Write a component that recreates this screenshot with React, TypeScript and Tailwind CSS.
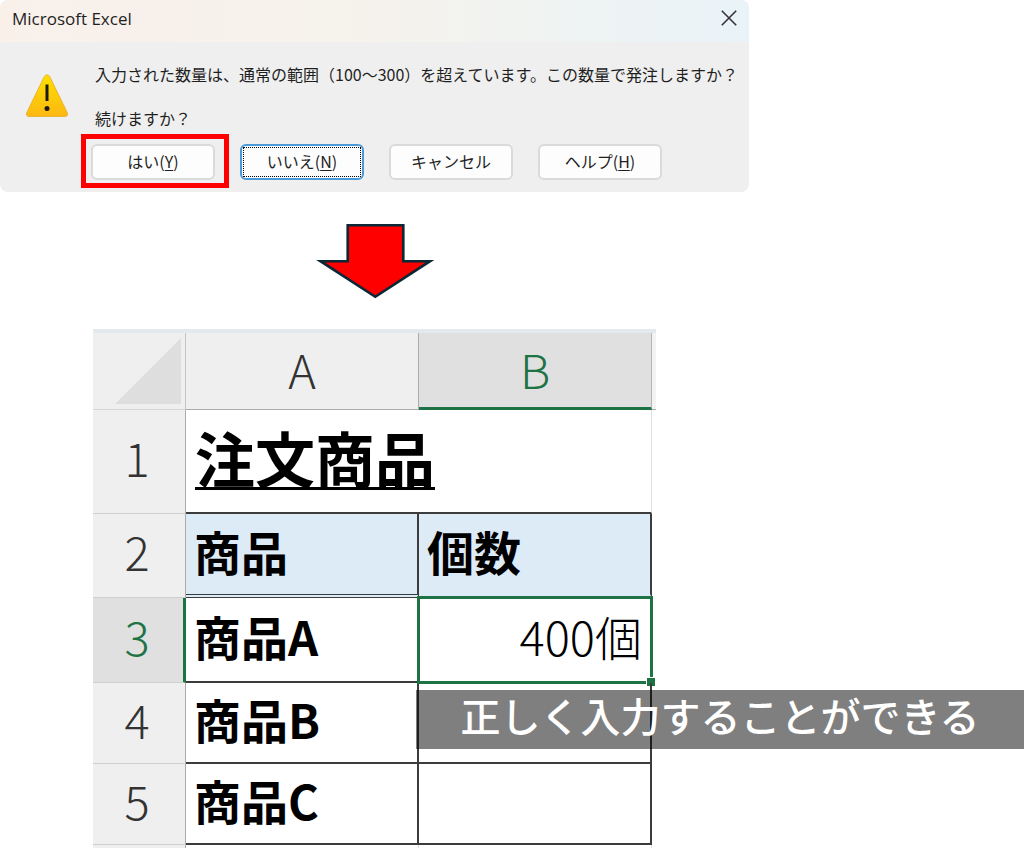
import type { ReactNode } from 'react';
import clsx from 'clsx';

export default function App() {
  return (
    <main className="relative min-h-screen overflow-hidden bg-white font-['Noto_Sans_CJK_JP',sans-serif] text-black">
      <div className="flex w-full max-w-[749px] flex-col items-center">
        <ConfirmDialog />
        <DownArrow />
        <Sheet />
      </div>

      <p className="absolute top-[690px] right-0 left-[416px] bg-black/50 pb-2 text-center text-[40px] leading-[51px] font-medium whitespace-nowrap text-white">
        正しく入力することができる
      </p>
    </main>
  );
}

function ConfirmDialog() {
  return (
    <section
      role="dialog"
      aria-labelledby="dialog-title"
      className="w-full overflow-hidden rounded-lg bg-[#efefef]"
    >
      <header className="flex h-[42px] items-center justify-between bg-linear-to-r from-[#f9f0ea] via-[#f5f2ec] to-[#e9f3f8] px-3">
        <h1
          id="dialog-title"
          className="pb-1 font-['Open_Sans',sans-serif] text-[17px] text-[#1f1f1f]"
        >
          Microsoft Excel
        </h1>
        <button type="button" aria-label="閉じる" className="pb-1.5">
          <svg viewBox="0 0 16 16" className="size-4" stroke="#333" strokeWidth="1.6">
            <path d="M0.8 0.8 15.2 15.2M15.2 0.8 0.8 15.2" />
          </svg>
        </button>
      </header>

      <div className="flex pt-5 pl-6">
        <WarningIcon />
        <div className="ml-[26px] text-base leading-6 whitespace-nowrap text-[#1f1f1f]">
          <p>入力された数量は、通常の範囲（100～300）を超えています。この数量で発注しますか？</p>
          <p className="mt-5">続けますか？</p>
        </div>
      </div>

      <div className="mt-3.5 flex gap-[25px] pb-3 pl-[91px]">
        <div className="relative">
          <DialogButton>
            はい(<u>Y</u>)
          </DialogButton>
          <span className="pointer-events-none absolute -top-2.5 -right-3.5 -bottom-2 -left-2.5 border-5 border-[#ff0000]" />
        </div>
        <DialogButton focused>
          いいえ(<u>N</u>)
        </DialogButton>
        <DialogButton>キャンセル</DialogButton>
        <DialogButton>
          ヘルプ(<u>H</u>)
        </DialogButton>
      </div>
    </section>
  );
}

function DialogButton({ focused, children }: { focused?: boolean; children: ReactNode }) {
  return (
    <button
      type="button"
      className={clsx(
        'h-9 w-[124px] rounded-md border-2 bg-[#fdfdfd] p-px text-base leading-7 text-[#1f1f1f]',
        focused ? 'border-[#4a9ad8]' : 'border-[#dadada]'
      )}
    >
      <span
        className={clsx(
          'flex h-full items-center justify-center border pb-0.5',
          focused ? 'border-dotted border-black' : 'border-transparent'
        )}
      >
        <span className="underline-offset-2">{children}</span>
      </span>
    </button>
  );
}

function WarningIcon() {
  return (
    <svg viewBox="0 0 44 44" className="mt-3 ml-px size-11 shrink-0">
      <defs>
        <linearGradient id="warn" x1="0" y1="0" x2="0" y2="1">
          <stop offset="0" stopColor="#fde000" />
          <stop offset="1" stopColor="#fcb813" />
        </linearGradient>
      </defs>
      <path
        d="M19.2 2.8Q22 -1.2 24.8 2.8L42.2 38.5Q43.5 42.3 39.8 42.5H4.2Q0.5 42.3 1.8 38.5Z"
        fill="url(#warn)"
        stroke="#e9a820"
        strokeWidth="0.8"
      />
      <path d="M22 10.5V27" stroke="#1c1a10" strokeWidth="3" />
      <circle cx="22" cy="34.4" r="2.5" fill="#1c1a10" />
    </svg>
  );
}

function DownArrow() {
  return (
    <svg viewBox="0 0 120 76" className="mt-8 h-[76px] w-[120px]">
      <path
        d="M32.7 1.2H88.3V37.2H115L60.3 72.8L5.5 37.2H32.7Z"
        fill="#ff0000"
        stroke="#0b2836"
        strokeWidth="2.6"
      />
    </svg>
  );
}

function Sheet() {
  return (
    <table className="mt-[29px] w-full max-w-[563px] table-fixed border-separate border-spacing-0 border-t-4 border-[#e3eaee] text-left text-[47px] leading-none">
      <colgroup>
        <col className="w-[93px]" />
        <col />
        <col />
        <col className="w-1" />
      </colgroup>
      <thead>
        <tr className="h-[77px] text-center">
          <td className="border-r border-b border-r-[#c4c4c4] border-b-[#d6d6d6] bg-[#efefef] pr-1">
            <svg viewBox="0 0 66 66" className="ml-auto size-[66px]">
              <path d="M66 0V66H0Z" fill="#dedede" />
            </svg>
          </td>
          <th className="border-r border-b border-[#ababab] bg-[#efefef] pb-1.5 font-light text-[#333]">
            A
          </th>
          <th className="border-r border-b-3 border-r-[#b5b5b5] border-b-[#1e7344] bg-[#e0e0e0] pb-1 font-light text-[#1e7344]">
            B
          </th>
          <td className="border-b border-[#ababab] bg-[#f3f3f3]" />
        </tr>
      </thead>
      <tbody>
        <tr className="h-[104px]">
          <RowHeader>1</RowHeader>
          <td
            colSpan={2}
            className="border-r border-b-2 border-r-[#e1e1e1] border-b-[#3c3c3c] pb-2 pl-[9px] text-[60px] font-bold"
          >
            <span className="underline decoration-3 underline-offset-4">{title}</span>
          </td>
          <td />
        </tr>
        <tr className="h-[84px] font-bold">
          <RowHeader>2</RowHeader>
          <td className="border-r-2 border-b-4 border-double border-[#3c3c3c] bg-[#ddebf7] pb-2 pl-2">
            商品
          </td>
          <td className="border-r-2 border-b-4 border-r-[#3c3c3c] border-b-transparent bg-[#ddebf7] pb-2 pl-2">
            個数
          </td>
          <td />
        </tr>
        {items.map((item) => (
          <tr key={item.row} className={item.selected ? 'h-[85px]' : 'h-[81px]'}>
            <RowHeader selected={item.selected}>{item.row}</RowHeader>
            <td className="border-r-2 border-b-2 border-[#3c3c3c] pb-2 pl-2 font-bold">
              {item.name}
            </td>
            <td className="relative border-r-2 border-b-2 border-[#3c3c3c] pr-2 pb-2 text-right font-light">
              {item.count}
              {item.selected && (
                <span className="absolute -top-0.5 -right-[3px] -bottom-[3px] -left-0.5 border-3 border-[#1e7344]">
                  <span className="absolute -right-1.5 -bottom-1.5 size-2.5 border border-white bg-[#1e7344]" />
                </span>
              )}
            </td>
            <td />
          </tr>
        ))}
        <tr className="h-1">
          <td className="border-r border-[#ababab] bg-[#efefef]" />
          <td className="border-r border-[#e1e1e1]" />
          <td className="border-r border-[#e1e1e1]" />
          <td />
        </tr>
      </tbody>
    </table>
  );
}

function RowHeader({ selected, children }: { selected?: boolean; children: ReactNode }) {
  return (
    <th
      className={clsx(
        'border-b border-b-[#cfcfcf] pb-2.5 text-center font-light',
        selected
          ? 'border-r-3 border-r-[#1e7344] bg-[#e0e0e0] pr-0.5 text-[#1e7344]'
          : 'border-r border-r-[#ababab] bg-[#efefef] pr-1 text-[#333]'
      )}
    >
      {children}
    </th>
  );
}

const title = '注文商品';

const items = [
  { row: 3, name: '商品A', count: '400個', selected: true },
  { row: 4, name: '商品B', count: '', selected: false },
  { row: 5, name: '商品C', count: '', selected: false },
];
